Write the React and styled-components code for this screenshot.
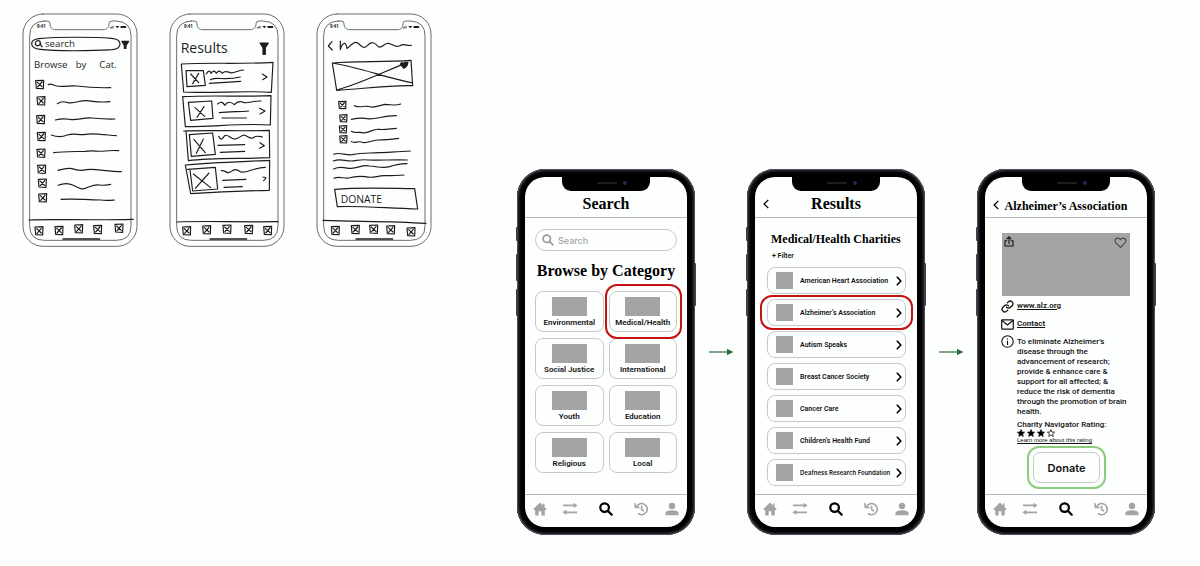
import React from "react";
import styled, { createGlobalStyle, css } from "styled-components";

const color = {
  paper: "#fdfffe",
  ink: "#111",
  grey: "#a3a4a6",
  line: "#c6c9c9",
  red: "#c5140f",
  green: "#8fcb7d",
  arrow: "#2f6b3c",
};
const serif = '"Liberation Serif", "Times New Roman", serif';
const sans = 'Roboto, "Liberation Sans", sans-serif';
const wideSans = 'Inter, "Liberation Sans", sans-serif';

const GlobalStyle = createGlobalStyle`
  *, *::before, *::after { box-sizing: border-box; }
  body { margin: 0; background: ${color.paper}; color: ${color.ink}; font-family: ${sans}; }
  h1, h2, p, ul { margin: 0; padding: 0; }
  ul { list-style: none; }
  button, input { font: inherit; color: inherit; }
  svg { display: block; }
`;

/* ---------- page ---------- */
const Board = styled.main`
  display: flex;
  justify-content: space-between;
  align-items: flex-start;
  gap: 24px;
  padding: 13px 45px 30px 22px;
`;
const SketchGroup = styled.section`
  display: flex;
  flex: none;
  gap: 31px;
`;
const FlowGroup = styled.section`
  display: flex;
  flex: none;
  align-items: center;
  padding-top: 156px;
`;

/* ---------- hand-drawn wireframes ---------- */
const Drawing = styled.svg`
  width: 116px;
  height: 234px;
  fill: none;
  stroke: #1c1c1c;
  stroke-width: 3.5;
  stroke-linecap: round;
  stroke-linejoin: round;
`;
const Written = styled.text`
  fill: #1c1c1c;
  stroke: none;
  font-family: "Open Sans", sans-serif;
  font-size: ${(p) => p.$size}px;
  font-weight: ${(p) => p.$weight || 500};
`;

const xBox = (x, y, w = 24, h = 25) =>
  `M${x} ${y + 1}L${x + w} ${y}L${x + w - 1} ${y + h}L${x + 2} ${y + h - 1}Z` +
  `M${x + 5} ${y + 6}L${x + w - 5} ${y + h - 6}M${x + w - 5} ${y + 5}L${x + 6} ${y + h - 5}`;

function Sketch({ label, tabs, line, origin = 21, children }) {
  return (
    <Drawing viewBox={`${origin} 24 348 702`} role="img" aria-label={label}>
      <g stroke="#6b6b6b" strokeWidth="3" transform={`translate(${origin - 21} 0)`}>
        <rect x="24" y="27" width="342" height="697" rx="60" />
        <path d="M88 48H96Q105 48 105 56C105 68 111 74 123 74H264C276 74 282 68 282 56Q282 48 291 48H304Q348 50 348 92V662Q348 706 304 706H88Q44 706 44 662V92Q44 50 88 48Z" />
      </g>
      <Written x="66" y="70" $size={13} $weight={700}>9:41</Written>
      <path d="M286 68v1M290 66v3M294 64v5" strokeWidth="2.5" />
      <path d="M301 63h12l-6 7z" fill="#1c1c1c" stroke="none" />
      <path d="M319 66h12" strokeWidth="6" />
      {children}
      <path d={line} />
      <path d={tabs.map(([x, y]) => xBox(x, y)).join("")} />
      <path d="M144 702H254" strokeWidth="4" />
    </Drawing>
  );
}

const SearchSketch = () => (
  <Sketch
    label="Search wireframe"
    line="M42 645C110 641 200 647 355 643"
    tabs={[[60, 665], [120, 664], [179, 659], [236, 661], [300, 657]]}
  >
    <path d="M72 101C130 95 240 96 290 100C324 103 322 130 292 134C230 138 120 139 76 133C42 130 42 104 72 101Z" />
    <path d="M75 109c-8-6-18 3-12 11c6 6 15 0 12-11zl3 13l4 3" />
    <Written x="90" y="126" $size={29}>search</Written>
    <path d="M321 109H341L333 121V130H328V121Z" fill="#1c1c1c" />
    <Written y="189" $size={29}>
      <tspan x="57">Browse</tspan> <tspan x="182">by</tspan> <tspan x="253">Cat.</tspan>
    </Written>
    <path
      d={[[62, 226], [66, 275], [65, 331], [67, 382], [66, 432], [68, 480], [70, 522], [71, 566]]
        .map(([x, y]) => xBox(x, y))
        .join("")}
    />
    <path d="M100 239c10-6 12 2 25 4c20 4 40-2 60 0c30 4 60 6 102 5" />
    <path d="M127 296c12-8 20-6 32-3c20 4 36-8 56-6c20 2 40 6 70 3" />
    <path d="M121 345c20-6 30-4 44-2c18 4 40-6 66-4c20 2 40 4 69 3" />
    <path d="M109 390c16 6 28 8 48 0c20-6 30 0 50-1c20-4 34-2 50-1c16 0 30 4 47 4" />
    <path d="M116 443c30-4 60-3 94-4c24-4 40 2 60-1c16-2 28-2 41-1" />
    <path d="M129 496c20-4 30-8 42-5c16 6 26 8 44 3c26-4 60 6 104 6" />
    <path d="M129 541c20-8 34-6 46 0c16 8 24 14 38 8c16-6 26-12 42-9c12 2 20 0 32-2" />
    <path d="M138 583c40-2 80 1 120 2c14 2 26 1 40 0" />
  </Sketch>
);

const ResultsSketch = () => (
  <Sketch
    label="Results wireframe"
    line="M45 651C130 647 230 652 348 650"
    tabs={[[62, 665], [122, 662], [183, 660], [248, 661], [305, 664]]}
  >
    <Written x="56" y="143" $size={42}>Results</Written>
    <path d="M294 114H319L310 128V148H303V128Z" fill="#1c1c1c" />
    <path d="M58 177C140 172 240 178 333 172L328 262C240 256 150 266 65 261ZM72 197H124L130 241L75 245ZM86 207L110 233M110 205L92 236" />
    <path d="M133 207c6-12 12-10 14-2c6-10 12-8 16 0c6-10 12-8 18 0c8-10 16-4 24-2c12 4 20-8 40-8M145 224c20-10 40 4 90-8M142 235l94-6M301 207l14 9l-13 8" />
    <path d="M62 275C150 270 240 276 327 272L325 360C240 354 150 366 70 365ZM79 292L149 288L153 340L86 346ZM99 308L128 334M126 305L105 337" />
    <path d="M167 297c10-10 16-4 22 4c8-14 18-10 28-2c10-12 22-10 30-6c16 2 26-6 50-5M172 323c30-4 60-2 88-5M180 339l73 0M293 310l16 8l-15 9" />
    <path d="M65 378C150 374 240 380 322 376L323 458C240 462 150 458 79 467L72 378M82 389L152 384L160 448L88 454ZM96 404L130 443M124 402L103 445" />
    <path d="M170 394c6 14 12 8 18-2c8-6 16 8 28 10c12 2 18-10 30-12c10 2 16 14 28 8c10-8 18-4 27-2M168 421l80-2M175 442l73-3M294 413l13 9l-14 8" />
    <path d="M70 480C150 472 240 470 323 466L322 556C240 558 150 562 86 566ZM77 493L160 487L167 552L92 558L84 495M94 507L146 548M141 504L100 550" />
    <path d="M178 497c14-2 18 14 30 2c12-10 18-4 28 2c20 4 40-14 74-14M182 526l70-3M186 547l55-2M303 516c12 0 10 4 2 11" />
  </Sketch>
);

const DetailSketch = () => (
  <Sketch
    label="Charity detail wireframe"
    origin={24}
    line="M45 646C140 650 240 648 354 655"
    tabs={[[70, 664], [130, 661], [185, 660], [236, 662], [297, 668]]}
  >
    <path d="M72 110L61 123L73 135M97 108V134C102 114 114 106 117 130C126 128 134 106 148 113C160 122 166 134 178 122C190 108 200 112 210 124C220 134 230 112 242 115C256 118 262 130 276 122C288 114 298 124 310 121" />
    <path d="M73 174C150 168 230 172 309 166L314 242C240 240 160 252 86 256ZM73 174C150 186 240 220 311 233M86 255C160 236 240 194 300 172" />
    <path d="M288 190l-11-12q2-8 10-3q8-7 12 0q0 9-11 15z" fill="#1c1c1c" />
    <path d={[[92, 289], [95, 329], [94, 362], [95, 392]].map(([x, y]) => xBox(x, y, 22, 22)).join("")} />
    <path d="M139 302c14 8 28 0 40 2c20 8 36-4 52-6c18 0 30 6 47-1M130 343c20-4 30-6 48-2c24 4 50-10 87-9M130 379c14 8 20 0 32 4c20 4 30-12 50-10c20 2 36-2 53-3M130 409c10 8 16-2 30 2c14 8 30-6 50-6c20 0 40-2 62-5" />
    <path d="M77 448c20-8 34 4 56 1c30-6 50-4 80-6c30-2 60-2 94-5M76 468c20-8 34 0 54 0c20-2 34-6 50-3c30 2 80-2 118 0M77 492c20-10 34-2 52-2c22 0 34-12 56-7c24 2 40 8 60 2c16-6 30-8 52-9M78 520c16-8 30 2 44-1c20-6 34-6 50-4c20 6 34-2 56-3c20 0 40 0 60-2" />
    <path d="M80 553C160 546 240 550 320 551L329 612C240 610 160 602 88 605Z" />
    <Written x="98" y="595" $size={31}>DONATE</Written>
  </Sketch>
);

/* ---------- phone shell ---------- */
const Shell = styled.article`
  position: relative;
  width: 178px;
  height: 366px;
  padding: 8px;
  border-radius: 28px;
  background: #000;
  box-shadow: inset 0 0 0 1px #4b4d59, inset 0 0 3px 2px #34353e;
`;
const SideKey = styled.i`
  position: absolute;
  ${(p) => p.$side}: -1px;
  top: ${(p) => p.$top}px;
  width: 2px;
  height: ${(p) => p.$length}px;
  border-radius: 1px;
  background: #3e404b;
`;
const Screen = styled.div`
  display: flex;
  flex-direction: column;
  height: 100%;
  border-radius: 20px;
  background: ${color.paper};
  overflow: hidden;
`;
const Notch = styled.div`
  position: absolute;
  top: 7px;
  left: 50%;
  display: flex;
  justify-content: flex-end;
  align-items: center;
  gap: 6px;
  width: 88px;
  height: 15px;
  margin-left: -44px;
  padding: 0 23px 2px 0;
  border-radius: 0 0 9px 9px;
  background: #000;
`;
const Speaker = styled.i`
  width: 20px;
  height: 2px;
  border-radius: 1px;
  background: #1d1e22;
`;
const Camera = styled.i`
  width: 4px;
  height: 4px;
  border-radius: 50%;
  background: #1b2c4c;
`;
const Header = styled.header`
  display: grid;
  grid-template-columns: 18px 1fr 18px;
  align-items: center;
  flex: none;
  height: 41px;
  padding-top: 14px;
  border-bottom: 1px solid #b5b9b9;
`;
const Title = styled.h1`
  grid-column: 2;
  font: 700 ${(p) => (p.$long ? 12 : 16)}px/26px ${serif};
  ${(p) => p.$long && "padding-top: 2px;"}
  text-align: center;
  white-space: nowrap;
  color: #000;
`;
const BackButton = styled.button`
  grid-row: 1;
  display: flex;
  justify-content: flex-end;
  padding: 0 4px 0 0;
  border: 0;
  background: none;
`;
const Content = styled.div`
  flex: 1;
  min-height: 0;
  padding: ${(p) => p.$pad};
`;
const TabBar = styled.nav`
  display: grid;
  grid-template-columns: 29fr 32fr 39fr 32fr 30fr;
  flex: none;
  height: 33px;
  padding-bottom: 4px;
  border-top: 1px solid #b5b9b9;
`;
const Tab = styled.button`
  display: flex;
  align-items: center;
  justify-content: center;
  padding: 0;
  border: 0;
  background: none;
  color: ${(p) => (p.$active ? "#000" : "#a2a3a5")};
`;

const MagnifierIcon = ({ size = 14, weight = 2.2 }) => (
  <svg width={size} height={size} viewBox="0 0 14 14" fill="none" stroke="currentColor" strokeWidth={weight} strokeLinecap="round">
    <circle cx="5.6" cy="5.6" r="4.3" />
    <path d="M8.9 8.9L12.7 12.7" />
  </svg>
);
const ChevronIcon = ({ left }) => (
  <svg width="6" height="10" viewBox="0 0 6 10" fill="none" stroke="#000" strokeWidth={left ? 1.3 : 1.6}>
    <path d={left ? "M5.3 .9L1.1 5L5.3 9.1" : "M.8 .8L4.8 5L.8 9.2"} />
  </svg>
);

const tabs = [
  {
    name: "Home",
    icon: (
      <svg width="14" height="14" viewBox="0 0 14 14" fill="currentColor">
        <path d="M7 .6L.3 7.1L1 7.9H2.2V13.4H5.6V9.2H8.4V13.4H11.8V7.9H13L13.7 7.1L11.5 5V1.6H10V3.5Z" />
      </svg>
    ),
  },
  {
    name: "Transfer",
    icon: (
      <svg width="16" height="14" viewBox="0 0 16 14" fill="currentColor">
        <path d="M1 2.6H11.6V.8L15.6 3.4L11.6 6V4.3H1ZM15 9.5H4.4V7.7L.4 10.3L4.4 12.9V11.2H15Z" />
      </svg>
    ),
  },
  { name: "Search", active: true, icon: <MagnifierIcon /> },
  {
    name: "History",
    icon: (
      <svg width="15" height="14" viewBox="0 0 15 14" fill="none" stroke="currentColor" strokeWidth="1.6">
        <path d="M2.6 4.6A5.6 5.6 0 1 1 4 11.4M7.6 3.8V7.4L10 9.1" />
        <path d="M.9 1.2L1.4 5.4H5.4" />
      </svg>
    ),
  },
  {
    name: "Profile",
    icon: (
      <svg width="14" height="14" viewBox="0 0 14 14" fill="currentColor">
        <circle cx="7" cy="3.9" r="3.2" />
        <path d="M.4 13.2V11.6C.4 9.2 3.6 8.3 7 8.3S13.6 9.2 13.6 11.6V13.2Z" />
      </svg>
    ),
  },
];

function Phone({ title, long, back, pad, children }) {
  return (
    <Shell>
      <SideKey $side="left" $top={58} $length={14} />
      <SideKey $side="left" $top={85} $length={27} />
      <SideKey $side="left" $top={120} $length={27} />
      <SideKey $side="right" $top={94} $length={43} />
      <Screen>
        <Header>
          {back && (
            <BackButton aria-label="Back">
              <ChevronIcon left />
            </BackButton>
          )}
          <Title $long={long}>{title}</Title>
        </Header>
        <Content $pad={pad}>{children}</Content>
        <TabBar aria-label="Main">
          {tabs.map((t) => (
            <Tab key={t.name} aria-label={t.name} $active={t.active}>
              {t.icon}
            </Tab>
          ))}
        </TabBar>
      </Screen>
      <Notch>
        <Speaker />
        <Camera />
      </Notch>
    </Shell>
  );
}

/* ring drawn around the control that the flow follows */
const ring = (tone, inset) => css`
  position: relative;
  &::after {
    content: "";
    position: absolute;
    inset: ${inset};
    border: 2px solid ${tone};
    border-radius: 12px;
    pointer-events: none;
  }
`;

/* ---------- search screen ---------- */
const SearchField = styled.label`
  display: flex;
  align-items: center;
  gap: 4px;
  height: 22px;
  padding: 0 8px 0 6px;
  border: 1px solid ${color.line};
  border-radius: 11px;
  color: #97999b;
`;
const SearchInput = styled.input`
  flex: 1;
  min-width: 0;
  padding: 0;
  border: 0;
  outline: 0;
  background: none;
  font-family: ${wideSans};
  font-size: 9px;
  font-weight: 500;
  &::placeholder { color: #a3a5a7; opacity: 1; }
`;
const SectionTitle = styled.h2`
  padding: 10px 0;
  font: 700 16px/20px ${serif};
  text-align: center;
  white-space: nowrap;
  color: #000;
`;
const CategoryGrid = styled.ul`
  display: grid;
  grid-template-columns: 1fr 1fr;
  gap: 6px 5px;
`;
const Category = styled.button`
  display: flex;
  flex-direction: column;
  align-items: center;
  width: 100%;
  height: 41px;
  padding: 5px 0 0;
  border: 1px solid ${color.line};
  border-radius: 8px;
  background: none;
  font-size: 8px;
  font-weight: 600;
  line-height: 14px;
  ${(p) => p.$picked && ring(color.red, "-8px -6px -8px -5px")}
`;
const Thumb = styled.span`
  flex: none;
  width: ${(p) => p.$w}px;
  height: ${(p) => p.$h}px;
  background: ${color.grey};
`;

const categories = [
  "Environmental", "Medical/Health", "Social Justice", "International",
  "Youth", "Education", "Religious", "Local",
];

const SearchScreen = () => (
  <Phone title="Search" pad="11px 10px 0">
    <SearchField>
      <MagnifierIcon size={12} weight={2} />
      <SearchInput type="search" placeholder="Search" aria-label="Search" />
    </SearchField>
    <SectionTitle>Browse by Category</SectionTitle>
    <CategoryGrid>
      {categories.map((name) => (
        <li key={name}>
          <Category $picked={name === "Medical/Health"}>
            <Thumb $w={35} $h={19} />
            {name}
          </Category>
        </li>
      ))}
    </CategoryGrid>
  </Phone>
);

/* ---------- results screen ---------- */
const ResultsTitle = styled.h2`
  padding-left: 4px;
  font: 700 12px/18px ${serif};
  white-space: nowrap;
  color: #000;
`;
const FilterButton = styled.button`
  display: block;
  height: 12px;
  margin: 2px 0 5px;
  padding: 0 5px;
  border: 0;
  background: none;
  font-size: 7px;
  font-weight: 600;
  line-height: 12px;
`;
const ResultList = styled.ul`
  display: grid;
  gap: 5px;
`;
const Result = styled.button`
  display: grid;
  grid-template-columns: 17px 1fr 6px;
  align-items: center;
  column-gap: 7px;
  width: 100%;
  height: 27px;
  padding: 0 3px 0 8px;
  border: 1px solid ${color.line};
  border-radius: 8px;
  background: none;
  text-align: left;
  ${(p) => p.$picked && ring(color.red, "-5px -8px")}
`;
/* names too long for the row drop to a smaller size */
const ResultName = styled.span`
  min-width: 0;
  font-family: ${(p) => (p.$long ? wideSans : sans)};
  font-size: ${(p) => (p.$long ? 6 : 7)}px;
  font-weight: 600;
  line-height: 10px;
  white-space: nowrap;
`;

const charities = [
  "American Heart Association", "Alzheimer’s Association", "Autism Speaks",
  "Breast Cancer Society", "Cancer Care", "Children’s Health Fund",
  "Deafness Research Foundation",
];

const ResultsScreen = () => (
  <Phone title="Results" back pad="12px 11px 0 12px">
    <ResultsTitle>Medical/Health Charities</ResultsTitle>
    <FilterButton>+ Filter</FilterButton>
    <ResultList>
      {charities.map((name) => (
        <li key={name}>
          <Result $picked={name.startsWith("Alz")}>
            <Thumb $w={17} $h={17} />
            <ResultName $long={name.length > 26}>{name}</ResultName>
            <ChevronIcon />
          </Result>
        </li>
      ))}
    </ResultList>
  </Phone>
);

/* ---------- detail screen ---------- */
const Banner = styled.div`
  display: flex;
  justify-content: space-between;
  align-items: flex-start;
  height: 63px;
  margin: 0 2px 1px 1px;
  padding: 3px 3px 0 2px;
  background: ${color.grey};
`;
const IconButton = styled.button`
  padding: 0;
  border: 0;
  background: none;
`;
const InfoRow = styled.div`
  display: grid;
  grid-template-columns: 13px 1fr;
  align-items: ${(p) => (p.$top ? "start" : "center")};
  column-gap: 3px;
  min-height: 18px;
  padding-top: ${(p) => (p.$top ? 2 : 0)}px;
`;
const TextLink = styled.a`
  justify-self: start;
  color: inherit;
  font-family: ${(p) => (p.$small ? '"Liberation Sans", sans-serif' : sans)};
  font-size: ${(p) => (p.$small ? 6 : 8)}px;
  font-weight: ${(p) => (p.$small ? 400 : 600)};
  line-height: ${(p) => (p.$small ? 7 : 10)}px;
  text-decoration: underline;
  text-underline-offset: 1px;
`;
const Mission = styled.p`
  font-size: 8px;
  font-weight: 500;
  line-height: 10px;
  white-space: nowrap;
  padding-top: 2px;
`;
const Rating = styled.div`
  display: flex;
  flex-direction: column;
  align-items: flex-start;
  padding: 4px 0 0 16px;
  font-size: 8px;
  font-weight: 500;
  line-height: 8px;
`;
const Stars = styled.div`
  display: flex;
  gap: 2px;
`;
const DonateButton = styled.button`
  display: block;
  width: 67px;
  height: 31px;
  margin: 8px auto 0;
  padding: 0;
  border: 1px solid ${color.line};
  border-radius: 7px;
  background: none;
  font-family: ${wideSans};
  font-size: 11px;
  font-weight: 600;
  ${ring(color.green, "-7px")}
`;

const lineIcon = { fill: "none", stroke: "#111", strokeWidth: 1.3, strokeLinecap: "round", strokeLinejoin: "round" };
const mission = [
  "To eliminate Alzheimer’s", "disease through the", "advancement of research;",
  "provide & enhance care &", "support for all affected; &",
  "reduce the risk of dementia", "through the promotion of brain", "health.",
];

const DetailScreen = () => (
  <Phone title="Alzheimer’s Association" long back pad="15px 15px 0 16px">
    <Banner>
      <IconButton aria-label="Share">
        <svg width="10" height="11" viewBox="0 0 10 11" {...lineIcon} strokeWidth="1.1">
          <path d="M2.8 4.8H1V10H9V4.8H7.2M5 7.4V.9M2.9 2.9L5 .8L7.1 2.9" />
        </svg>
      </IconButton>
      <IconButton aria-label="Save">
        <svg width="13" height="13" viewBox="0 0 13 13" {...lineIcon} strokeWidth="1.1" stroke="#444">
          <path d="M6.5 11.4L2 6.9C.1 4.8 1.4 2.1 3.8 2.1C5.1 2.1 6 2.9 6.5 3.8C7 2.9 7.9 2.1 9.2 2.1C11.6 2.1 12.9 4.8 11 6.9Z" />
        </svg>
      </IconButton>
    </Banner>
    <InfoRow>
      <svg width="13" height="13" viewBox="0 0 24 24" {...lineIcon} strokeWidth="2.4">
        <path d="M10 13a5 5 0 0 0 7.54.54l3-3a5 5 0 0 0-7.07-7.07l-1.72 1.71" />
        <path d="M14 11a5 5 0 0 0-7.54-.54l-3 3a5 5 0 0 0 7.07 7.07l1.71-1.71" />
      </svg>
      <TextLink href="#site">www.alz.org</TextLink>
    </InfoRow>
    <InfoRow>
      <svg width="13" height="11" viewBox="0 0 13 11" {...lineIcon} strokeWidth="1.2">
        <rect x=".7" y=".9" width="11.6" height="9.2" rx=".6" />
        <path d="M1 1.5L6.5 6L12 1.5" />
      </svg>
      <TextLink href="#contact">Contact</TextLink>
    </InfoRow>
    <InfoRow $top>
      <svg width="13" height="13" viewBox="0 0 13 13" {...lineIcon} strokeWidth="1.1">
        <circle cx="6.5" cy="6.5" r="5.7" />
        <path d="M6.5 6V9.4M6.5 3.8V4" />
      </svg>
      <Mission>
        {mission.map((text, i) => (
          <React.Fragment key={text}>
            {i > 0 && <br />}
            {text}
          </React.Fragment>
        ))}
      </Mission>
    </InfoRow>
    <Rating>
      Charity Navigator Rating:
      <Stars role="img" aria-label="3 of 4 stars">
        {[true, true, true, false].map((full, i) => (
          <svg key={i} width="8" height="8" viewBox="0 0 10 10" fill={full ? "#000" : "none"} stroke="#000" strokeWidth=".9">
            <path d="M5 .7L6.2 3.8L9.5 4L7 6.1L7.8 9.3L5 7.5L2.2 9.3L3 6.1L.5 4L3.8 3.8Z" />
          </svg>
        ))}
      </Stars>
      <TextLink href="#rating" $small>Learn more about this rating</TextLink>
    </Rating>
    <DonateButton>Donate</DonateButton>
  </Phone>
);

/* ---------- arrows between screens ---------- */
const ArrowDrawing = styled.svg`
  width: 26px;
  height: 8px;
  margin: 0 13px;
`;
const Arrow = () => (
  <ArrowDrawing viewBox="0 0 26 8" aria-hidden="true">
    <path d="M1 4H20" stroke={color.arrow} strokeWidth="1.2" />
    <path d="M19 .8L25.4 4L19 7.2Z" fill={color.arrow} />
  </ArrowDrawing>
);

export default function App() {
  return (
    <>
      <GlobalStyle />
      <Board>
        <SketchGroup aria-label="Wireframe sketches">
          <SearchSketch />
          <ResultsSketch />
          <DetailSketch />
        </SketchGroup>
        <FlowGroup aria-label="Donation flow">
          <SearchScreen />
          <Arrow />
          <ResultsScreen />
          <Arrow />
          <DetailScreen />
        </FlowGroup>
      </Board>
    </>
  );
}
